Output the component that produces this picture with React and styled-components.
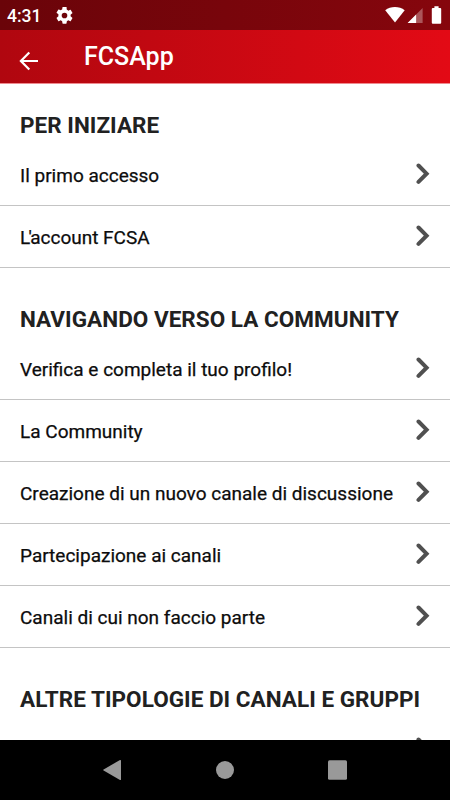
import React from 'react'
import styled, { createGlobalStyle } from 'styled-components'

const GlobalStyle = createGlobalStyle`
  body {
    margin: 0;
    overflow: hidden;
  }
`
const Screen = styled.div`
  width: 450px;
  height: 800px;
  display: flex;
  overflow: hidden;
  flex-direction: column;
  background-color: #ffffff;
  font-family: Roboto, 'Liberation Sans', sans-serif;
`
const StatusBar = styled.div`
  height: 30px;
  display: flex;
  color: #ffffff;
  flex-shrink: 0;
  padding: 0 7px;
  align-items: center;
  box-sizing: border-box;
  background: linear-gradient(90deg, #6a0409, #86060d);
`
const Clock = styled.span`
  width: 49px;
  font-size: 17.5px;
  font-weight: 500;
  line-height: 30px;
  padding-top: 2px;
`
const StatusIcons = styled.div`
  display: flex;
  margin-left: auto;
`
const Header = styled.header`
  height: 53px;
  display: flex;
  color: #ffffff;
  flex-shrink: 0;
  padding-left: 19px;
  align-items: center;
  border-bottom: 1px solid #ef8a8f;
  background: linear-gradient(90deg, #b0070f, #e30a15);
`
const BackButton = styled.button`
  padding: 0;
  width: 65px;
  height: 53px;
  border: none;
  display: flex;
  color: inherit;
  background: none;
  align-items: center;
  padding-top: 8px;
  box-sizing: border-box;
`
const Title = styled.h1`
  margin: 0;
  font-size: 25px;
  font-weight: 500;
  line-height: 53px;
`
const Content = styled.main`
  flex: 1;
  min-height: 0;
  overflow: hidden;
`
const Section = styled.section`
  padding-top: ${(props) => (props.$first ? '25.2px' : '35.1px')};
`
const SectionTitle = styled.h2`
  margin: 0;
  height: ${(props) => (props.$first ? '34.9px' : '35.4px')};
  color: #212121;
  font-size: 22.5px;
  font-weight: 700;
  line-height: 32px;
  padding-left: 20px;
  white-space: nowrap;
  letter-spacing: 0.03px;
`
const Row = styled.div`
  height: 61.9px;
  display: flex;
  padding: 0 20.5px 0 20px;
  align-items: center;
  box-sizing: border-box;
  border-bottom: 1px solid #c4c4c4;
  justify-content: space-between;
`
const RowLabel = styled.span`
  color: #0c0c0c;
  font-size: 19px;
  font-weight: 400;
  line-height: 24px;
  padding-top: 2.8px;
  white-space: nowrap;
  -webkit-text-stroke: 0.25px #0c0c0c;
`
// pulls the apostrophe of an elided article close to its letters
const Elision = styled.span`
  letter-spacing: -1.7px;
`
const ChevronIcon = styled.svg`
  width: 14px;
  height: 22px;
  flex-shrink: 0;
  margin-bottom: 1px;
`
const NavBar = styled.nav`
  height: 60px;
  flex-shrink: 0;
  display: flex;
  align-items: center;
  justify-content: center;
  background-color: #000000;
`
const NavItem = styled.div`
  width: 112.5px;
  display: flex;
  justify-content: center;
`

const sections = [
  {
    title: 'PER INIZIARE',
    items: [{ label: 'Il primo accesso' }, { article: "L'", label: 'account FCSA' }],
  },
  {
    title: 'NAVIGANDO VERSO LA COMMUNITY',
    items: [
      { label: 'Verifica e completa il tuo profilo!' },
      { label: 'La Community' },
      { label: 'Creazione di un nuovo canale di discussione' },
      { label: 'Partecipazione ai canali' },
      { label: 'Canali di cui non faccio parte' },
    ],
  },
  {
    title: 'ALTRE TIPOLOGIE DI CANALI E GRUPPI',
    items: [{ label: '' }],
  },
]

const Gear = () => (
  <svg width="17" height="17" viewBox="2 2 20 20" fill="currentColor">
    <path d="M19.14 12.94c.04-.3.06-.61.06-.94s-.02-.64-.07-.94l2.03-1.58a.49.49 0 0 0 .12-.61l-1.92-3.32a.49.49 0 0 0-.59-.22l-2.39.96a7 7 0 0 0-1.62-.94l-.36-2.54A.48.48 0 0 0 13.92 2h-3.84a.48.48 0 0 0-.48.41l-.36 2.54a7 7 0 0 0-1.62.94l-2.39-.96a.49.49 0 0 0-.59.22L2.72 8.47a.49.49 0 0 0 .12.61l2.03 1.58a7.6 7.6 0 0 0 0 2.28l-2.03 1.58a.49.49 0 0 0-.12.61l1.92 3.32c.12.22.37.29.59.22l2.39-.96c.5.38 1.03.7 1.62.94l.36 2.54c.05.24.24.41.48.41h3.84c.24 0 .44-.17.48-.41l.36-2.54a7 7 0 0 0 1.62-.94l2.39.96c.22.08.47 0 .59-.22l1.92-3.32a.49.49 0 0 0-.12-.61zM12 15.3a3.3 3.3 0 1 1 0-6.6 3.3 3.3 0 0 1 0 6.6z" />
  </svg>
)

const SignalIcons = () => (
  <svg width="58" height="20" viewBox="0 0 58 20" fill="currentColor">
    <path d="M.2 5.2C5.6.9 14.3.9 19.7 5.2L10 17.4Z" />
    <path d="M37.6 3V18H22.6Z" opacity=".32" />
    <path d="M31.1 9.5V18H22.6Z" />
    <path d="M49.4 1.3h4.2v1.6h1.6q1 0 1 1v13.8q0 1-1 1h-7.4q-1 0-1-1V3.9q0-1 1-1h1.6z" />
  </svg>
)

const BackArrow = () => (
  <svg
    width="20"
    height="20"
    viewBox="0 0 20 20"
    fill="none"
    stroke="currentColor"
    strokeWidth="2.2"
  >
    <path d="M10.3 1.5 1.9 10 10.3 18.5M2 10H19" />
  </svg>
)

const Chevron = () => (
  <ChevronIcon
    viewBox="0 0 14 22"
    fill="none"
    stroke="#505050"
    strokeWidth="4"
    strokeLinecap="round"
  >
    <path d="M2.5 2.5 10.6 10.7 2.5 18.9" />
  </ChevronIcon>
)

export default function App() {
  return (
    <Screen>
      <GlobalStyle />
      <StatusBar>
        <Clock>4:31</Clock>
        <Gear />
        <StatusIcons>
          <SignalIcons />
        </StatusIcons>
      </StatusBar>
      <Header>
        <BackButton aria-label="Indietro">
          <BackArrow />
        </BackButton>
        <Title>FCSApp</Title>
      </Header>
      <Content>
        {sections.map((section, index) => (
          <Section key={section.title} $first={index === 0}>
            <SectionTitle $first={index === 0}>{section.title}</SectionTitle>
            {section.items.map((item) => (
              <Row key={item.label}>
                <RowLabel>
                  {item.article && <Elision>{item.article}</Elision>}
                  {item.label}
                </RowLabel>
                <Chevron />
              </Row>
            ))}
          </Section>
        ))}
      </Content>
      <NavBar>
        <NavItem>
          <svg width="20" height="22" viewBox="1 0 20 22" fill="#999999">
            <path d="M18 1Q19 .6 19 1.5V20.5Q19 21.4 18 21L1.6 11.6Q.6 11 1.6 10.4Z" />
          </svg>
        </NavItem>
        <NavItem>
          <svg width="20" height="20" viewBox="0 0 20 20" fill="#999999">
            <circle cx="10" cy="10" r="9" />
          </svg>
        </NavItem>
        <NavItem>
          <svg width="20" height="20" viewBox=".5 0 20 20" fill="#999999">
            <rect x=".5" y=".3" width="19" height="19.4" rx="1.5" />
          </svg>
        </NavItem>
      </NavBar>
    </Screen>
  )
}
